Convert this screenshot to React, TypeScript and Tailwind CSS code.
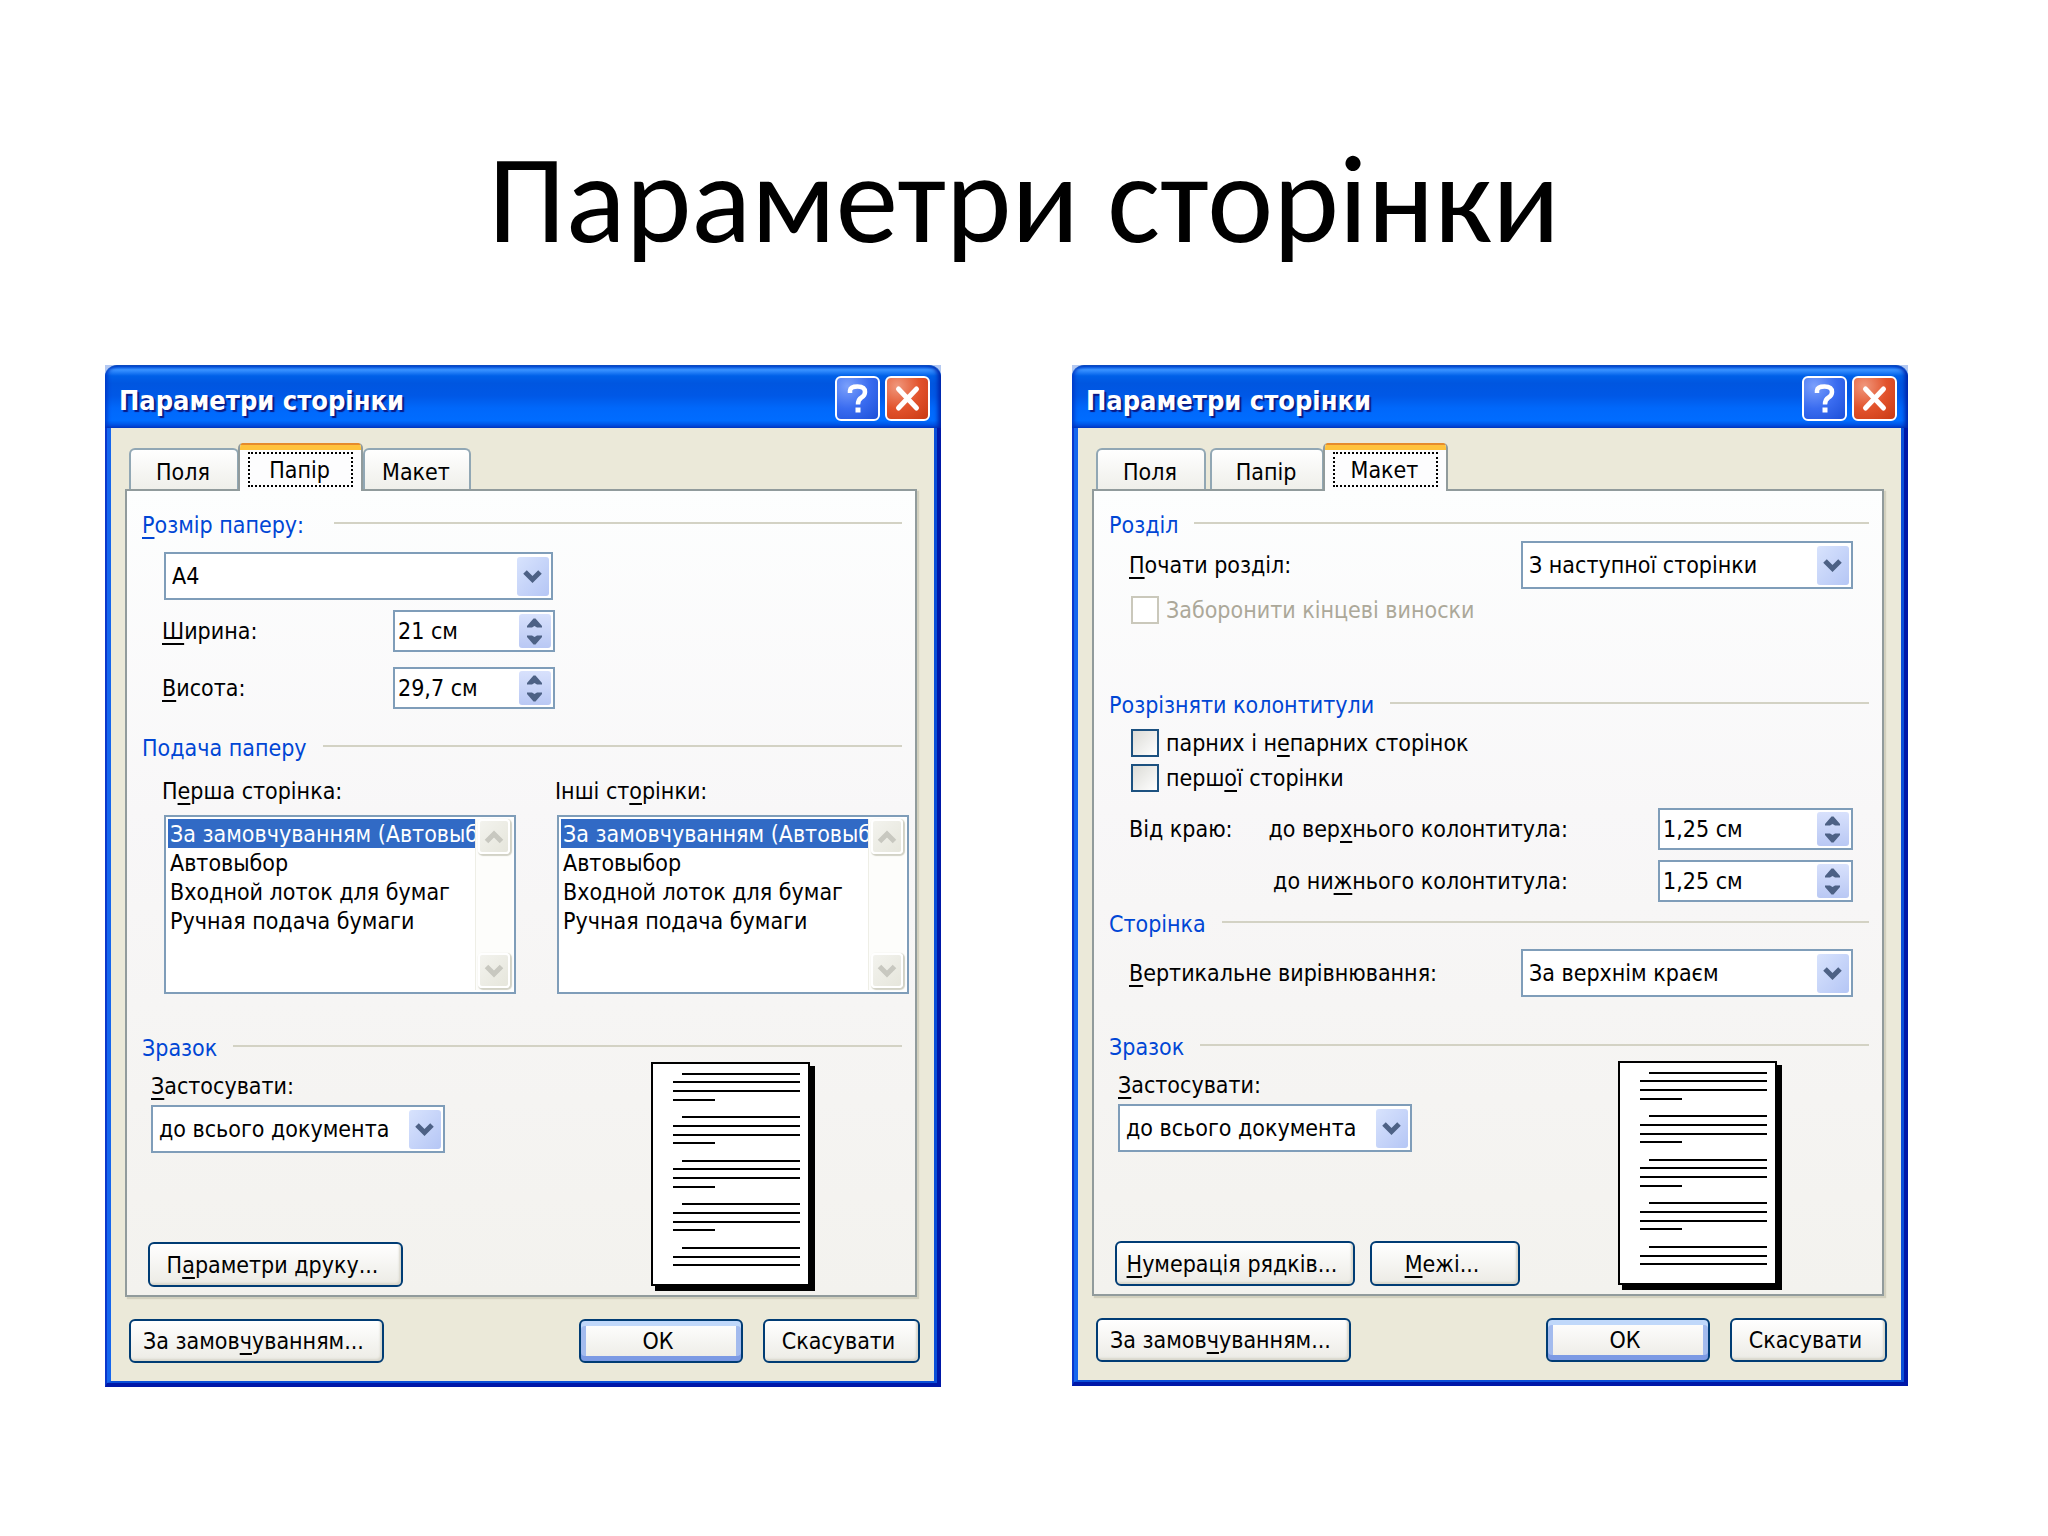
import { useId, type ReactNode } from "react";

function Key({ children }: { children: ReactNode }) {
  return (
    <span className="underline decoration-2 underline-offset-4 [text-decoration-skip-ink:none]">{children}</span>
  );
}

function Heading({ children, gap = "gap-4" }: { children: ReactNode; gap?: string }) {
  return (
    <div className={`flex items-center pl-px ${gap}`}>
      <h3 className="text-[#0046d5]">{children}</h3>
      <div className="mb-1 h-0.5 flex-1 bg-[#d3d2c4]" />
    </div>
  );
}

function Combo({ id, value, className, label }: { id?: string; value: string; className: string; label?: string }) {
  return (
    <div className={`relative h-12 border-2 border-[#7f9db9] bg-white ${className}`}>
      <select id={id} aria-label={label} className="block h-full w-full appearance-none bg-transparent pl-1.5 pr-9 outline-none">
        <option>{value}</option>
      </select>
      <svg viewBox="0 0 32 39" className="pointer-events-none absolute right-0.5 top-[3px] h-[39px] w-8">
        <defs>
          <linearGradient id="drop" x1="0" y1="0" x2="1" y2="1">
            <stop offset="0" stopColor="#d8e3fd" />
            <stop offset="1" stopColor="#b5c6f5" />
          </linearGradient>
        </defs>
        <rect width="32" height="39" rx="3" fill="url(#drop)" />
        <path d="M8 15 L15.5 22.5 L23 15" fill="none" stroke="#4d6185" strokeWidth="5" />
      </svg>
    </div>
  );
}

function Spinner({ id, value, className }: { id: string; value: string; className: string }) {
  return (
    <div className={`relative h-[42px] border-2 border-[#7f9db9] bg-white ${className}`}>
      <input id={id} defaultValue={value} className="block h-full w-full bg-transparent pl-[3px] pr-9 outline-none" />
      <svg viewBox="0 0 32 34" className="pointer-events-none absolute right-0.5 top-0.5 h-[34px] w-8">
        <defs>
          <linearGradient id="spin" x1="0" y1="0" x2="0" y2="1">
            <stop offset="0" stopColor="#d8e1fc" />
            <stop offset="1" stopColor="#b9c8f4" />
          </linearGradient>
        </defs>
        <rect width="32" height="34" rx="3" fill="url(#spin)" />
        <path d="M8 13.500 V12 L14.500 4.500 H16.500 L23 12 V13.500 H18 L15.500 12 L13 13.500 Z" fill="#4d6185" />
        <path d="M8 21.500 V23 L14.500 30.500 H16.500 L23 23 V21.500 H18 L15.500 23 L13 21.500 Z" fill="#4d6185" />
      </svg>
    </div>
  );
}

function ScrollButton({ label, d }: { label: string; d: string }) {
  return (
    <button
      type="button"
      disabled
      aria-label={label}
      className="flex h-[35px] w-[32px] items-center justify-center rounded-[4px] border-2 border-white bg-linear-to-br from-[#f3f3ee] to-[#e6e6dc] shadow-[1px_1px_1px_1px_#d2d2c6]"
    >
      <svg viewBox="0 0 20 14" className="h-[14px] w-5">
        <path d={d} fill="none" stroke="#c8c8c0" strokeWidth="5" />
      </svg>
    </button>
  );
}

const feeds = ["За замовчуванням (Автовыбор)", "Автовыбор", "Входной лоток для бумаг", "Ручная подача бумаги"];

function ListBox({ id }: { id: string }) {
  return (
    <div className="flex h-[179px] w-[352px] border-2 border-[#7f9db9] bg-white p-0.5">
      <select
        id={id}
        size={6}
        defaultValue={feeds[0]}
        className="min-w-0 flex-1 overflow-hidden bg-white outline-none [scrollbar-width:none]"
      >
        {feeds.map((feed) => (
          <option
            key={feed}
            className="h-[29px] px-0.5 pb-0 pt-0.5 leading-[29px] checked:bg-[linear-gradient(#316ac5,#316ac5)] checked:[-webkit-text-fill-color:white]"
          >
            {feed}
          </option>
        ))}
      </select>
      <div className="flex w-[37px] flex-col items-center justify-between border-l border-[#eeeee6] bg-[#fdfdfb] pb-0.5">
        <ScrollButton label="Вгору" d="M2.500 11.500 L10 4 L17.500 11.500" />
        <ScrollButton label="Вниз" d="M2.500 2.500 L10 10 L17.500 2.500" />
      </div>
    </div>
  );
}

function CheckRow({ children, disabled, className }: { children: ReactNode; disabled?: boolean; className: string }) {
  return (
    <label className={`ml-[23px] flex items-center gap-[7px] ${disabled ? "text-[#aca899]" : ""} ${className}`}>
      <input
        type="checkbox"
        disabled={disabled}
        className="h-7 w-7 shrink-0 appearance-none border-2 border-[#1c5180] bg-linear-to-br from-[#dcdcd7] to-white disabled:border-[#cac8bb] disabled:from-white"
      />
      <span>{children}</span>
    </label>
  );
}

function PushButton({ children, className, primary }: { children: ReactNode; className: string; primary?: boolean }) {
  return (
    <button
      type="button"
      className={`rounded-[6px] border-2 border-[#003c74] bg-linear-to-b from-white to-[#ecebe5] pr-1.5 ${
        primary
          ? "shadow-[inset_0_5px_0_#c0d8fa,inset_0_-5px_0_#7c9ae4,inset_5px_0_0_#a3bbee,inset_-5px_0_0_#a3bbee]"
          : "shadow-[inset_-2px_-2px_2px_#d9d7cc]"
      } ${className}`}
    >
      {children}
    </button>
  );
}

function PagePreview() {
  const rows = Array.from({ length: 24 }, (_, i) => i).filter((i) => i % 5 !== 4 && i < 23);
  return (
    <svg viewBox="0 0 164 229" className="h-[229px] w-[164px]" role="img" aria-label="Зразок сторінки">
      <rect x="4" y="4" width="160" height="225" />
      <rect x="1" y="1" width="157" height="222" fill="white" stroke="black" strokeWidth="2" />
      {rows.map((i) => (
        <rect
          key={i}
          x={i % 5 === 0 ? 31 : 22}
          y={Math.round(10.5 + i * 8.72)}
          width={i % 5 === 0 ? 118 : i % 5 === 3 ? 42 : 127}
          height="2"
        />
      ))}
    </svg>
  );
}

function Sample({ children }: { children: ReactNode }) {
  const id = useId();
  return (
    <div className="flex items-start justify-between pl-[7px] pr-[87px]">
      <div className="pt-2.5">
        <label htmlFor={id} className="ml-[3px] block">
          <Key>З</Key>астосувати:
        </label>
        <Combo id={id} value="до всього документа" className="ml-[3px] mt-[5px] w-[294px]" />
        <div className="mt-[89px] flex gap-[15px]">{children}</div>
      </div>
      <PagePreview />
    </div>
  );
}

function Tab({ children, active, className }: { children: ReactNode; active?: boolean; className: string }) {
  if (active) {
    return (
      <button
        type="button"
        role="tab"
        aria-selected="true"
        className={`relative z-10 -mb-0.5 flex h-12 flex-col overflow-hidden rounded-t-[5px] border-x-2 border-[#919b9c] bg-[#fdfdfe] ${className}`}
      >
        <span className="-mx-0.5 h-[7px] shrink-0 self-stretch border-t-2 border-[#e68b2c] bg-[#ffc23c]" />
        <span className="mx-2 mb-1 mt-0.5 flex flex-1 items-center justify-center self-stretch border-2 border-dotted border-black pr-0.5">
          {children}
        </span>
      </button>
    );
  }
  return (
    <button
      type="button"
      role="tab"
      aria-selected="false"
      className={`h-[41px] rounded-t-[6px] border-2 border-b-0 border-[#91a7b4] bg-linear-to-b from-white to-[#efefea] pr-0.5 pt-1 ${className}`}
    >
      {children}
    </button>
  );
}

function Dialog({ tabs, children }: { tabs: ReactNode; children: ReactNode }) {
  return (
    <section className="bg-[linear-gradient(#b4c9f2,#b4c9f2)] bg-[length:100%_12px] bg-no-repeat font-['DejaVu_Sans_Condensed','DejaVu_Sans',sans-serif] text-[23px] leading-7 text-black">
      <header className="flex h-[63px] items-center gap-[5px] rounded-t-[12px] border-t border-[#0a4ac0] bg-[linear-gradient(to_bottom,#0058e0_0%,#3a93ff_6%,#2a85fb_9%,#0060e8_16%,#0056e0_28%,#0058e6_48%,#0068fb_68%,#006cff_88%,#0050e0_96%,#0040c8_100%)] pl-[14px] pr-[11px] pt-[3px] shadow-[inset_-4px_0_4px_-1px_#0023a8,inset_4px_0_4px_-2px_#0036c4]">
        <h2 className="flex-1 pt-1 text-[27px] font-bold text-white [text-shadow:2px_2px_1px_#0a1883]">Параметри сторінки</h2>
        <button
          type="button"
          aria-label="Довідка"
          className="h-[45px] w-[45px] rounded-[6px] border-2 border-white bg-[radial-gradient(circle_at_25%_20%,#7ba0fb,#3a6cf0_50%,#1c4fd8)]"
        >
          <svg viewBox="0 0 41 41" className="h-[41px] w-[41px]">
            <path d="M13 15 V12.500 Q13.500 8.500 20.500 8.500 Q28 8.500 28 14 Q28 17.500 24.500 19.500 Q21 21.500 21 26.500" fill="none" stroke="white" strokeWidth="4.500" />
            <rect x="18.500" y="29.500" width="5" height="5" fill="white" />
          </svg>
        </button>
        <button
          type="button"
          aria-label="Закрити"
          className="h-[45px] w-[45px] rounded-[6px] border-2 border-white bg-[radial-gradient(circle_at_25%_20%,#f0977c,#e2532c_50%,#c93a14)]"
        >
          <svg viewBox="0 0 41 41" className="h-[41px] w-[41px]">
            <path d="M11.500 11 L29.500 30 M29.500 11 L11.500 30" fill="none" stroke="white" strokeWidth="5" strokeLinecap="round" />
          </svg>
        </button>
      </header>
      <div className="border-b-4 border-l-2 border-r-4 border-[#0018a8] border-l-[#0a37cc]">
        <div className="border-b-2 border-l-4 border-r-[3px] border-[#0b4fd8] border-l-[#1566ee] bg-[#ebe9d9] pb-[18px] pt-[15px]">
          <div role="tablist" className="flex h-[46px] items-end pl-[18px]">
            {tabs}
          </div>
          <div
            role="tabpanel"
            className="ml-[14px] mr-[17px] border-2 border-[#919b9c] bg-linear-to-b from-[#fdfefe] via-[#f8f7f8] via-40% to-[#f3f2ee] pb-1 pl-[14px] pr-[13px] pt-5 shadow-[2px_2px_1px_#d2d0be]"
          >
            {children}
          </div>
          <div className="mt-[22px] flex gap-5 pl-[18px] pr-[14px]">
            <PushButton className="mr-auto h-11 w-[255px]">
              За замов<Key>ч</Key>уванням...
            </PushButton>
            <PushButton primary className="h-11 w-[164px]">
              ОК
            </PushButton>
            <PushButton className="h-11 w-[157px]">Скасувати</PushButton>
          </div>
        </div>
      </div>
    </section>
  );
}

function PaperDialog() {
  return (
    <Dialog
      tabs={
        <>
          <Tab className="w-[110px]">Поля</Tab>
          <Tab active className="-ml-px w-[125px]">
            Папір
          </Tab>
          <Tab className="w-[108px]">Макет</Tab>
        </>
      }
    >
      <Heading gap="gap-[30px]">
        <Key>Р</Key>озмір паперу:
      </Heading>
      <Combo label="Розмір паперу" value="А4" className="ml-[23px] mt-[13px] w-[389px]" />
      <div className="mt-2.5 flex items-center pl-[21px]">
        <label htmlFor="width" className="w-[231px]">
          <Key>Ш</Key>ирина:
        </label>
        <Spinner id="width" value="21 см" className="w-[162px]" />
      </div>
      <div className="mt-[15px] flex items-center pl-[21px]">
        <label htmlFor="height" className="w-[231px]">
          <Key>В</Key>исота:
        </label>
        <Spinner id="height" value="29,7 см" className="w-[162px]" />
      </div>
      <div className="mt-[25px]">
        <Heading>Подача паперу</Heading>
      </div>
      <div className="-mr-[7px] mt-[15px] flex justify-between pl-[21px]">
        <div className="grid gap-2.5">
          <label htmlFor="first">
            П<Key>е</Key>рша сторінка:
          </label>
          <div className="pl-0.5">
            <ListBox id="first" />
          </div>
        </div>
        <div className="grid gap-2.5">
          <label htmlFor="other">
            Інші ст<Key>о</Key>рінки:
          </label>
          <div className="pl-0.5">
            <ListBox id="other" />
          </div>
        </div>
      </div>
      <div className="mt-10">
        <Heading>Зразок</Heading>
      </div>
      <Sample>
        <PushButton className="h-[45px] w-[255px]">
          П<Key>а</Key>раметри друку...
        </PushButton>
      </Sample>
    </Dialog>
  );
}

function LayoutDialog() {
  return (
    <Dialog
      tabs={
        <>
          <Tab className="mr-1 w-[110px]">Поля</Tab>
          <Tab className="w-[114px]">Папір</Tab>
          <Tab active className="-ml-px w-[125px]">
            Макет
          </Tab>
        </>
      }
    >
      <Heading>Розділ</Heading>
      <div className="mt-0.5 flex items-center justify-between pl-[21px] pr-4">
        <label htmlFor="start">
          <Key>П</Key>очати розділ:
        </label>
        <Combo id="start" value="З наступної сторінки" className="w-[332px]" />
      </div>
      <CheckRow disabled className="mt-[7px]">
        Заборонити кінцеві виноски
      </CheckRow>
      <div className="mt-[67px]">
        <Heading>Розрізняти колонтитули</Heading>
      </div>
      <CheckRow className="mt-2.5">
        парних і н<Key>е</Key>парних сторінок
      </CheckRow>
      <CheckRow className="mt-[7px]">
        перш<Key>о</Key>ї сторінки
      </CheckRow>
      <div className="mt-4 flex items-center pl-[21px] pr-4">
        <span>Від краю:</span>
        <label htmlFor="top" className="ml-auto mr-[90px]">
          до вер<Key>х</Key>нього колонтитула:
        </label>
        <Spinner id="top" value="1,25 см" className="w-[195px]" />
      </div>
      <div className="mt-2.5 flex items-center justify-end pr-4">
        <label htmlFor="bottom" className="mr-[90px]">
          до ни<Key>ж</Key>нього колонтитула:
        </label>
        <Spinner id="bottom" value="1,25 см" className="w-[195px]" />
      </div>
      <div className="mt-2">
        <Heading>Сторінка</Heading>
      </div>
      <div className="mt-[11px] flex items-center justify-between pl-[21px] pr-4">
        <label htmlFor="vertical">
          <Key>В</Key>ертикальне вирівнювання:
        </label>
        <Combo id="vertical" value="За верхнім краєм" className="w-[332px]" />
      </div>
      <div className="mt-9">
        <Heading>Зразок</Heading>
      </div>
      <Sample>
        <PushButton className="h-[45px] w-[240px]">
          <Key>Н</Key>умерація рядків...
        </PushButton>
        <PushButton className="h-[45px] w-[150px]">
          <Key>М</Key>ежі...
        </PushButton>
      </Sample>
    </Dialog>
  );
}

export default function App() {
  return (
    <main className="min-h-screen bg-white pb-10">
      <h1 className="pt-[120px] text-center font-[Carlito,Lato,sans-serif] text-[125px] leading-[160px] text-black">
        Параметри сторінки
      </h1>
      <div className="mt-[85px] grid grid-cols-2 items-start gap-[131px] pl-[105px] pr-[140px]">
        <PaperDialog />
        <LayoutDialog />
      </div>
    </main>
  );
}
